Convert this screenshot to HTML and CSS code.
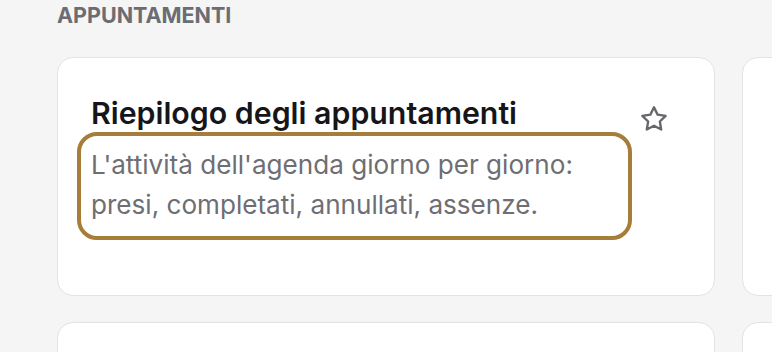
FILE: index.html
```html
<!DOCTYPE html>
<html lang="it">
<head>
<meta charset="utf-8">
<title>Appuntamenti</title>
<link rel="stylesheet" href="styles.css">
</head>
<body>
<section class="section">
  <h2 class="section-title">APPUNTAMENTI</h2>
  <div class="grid">
    <article class="card">
      <div class="card-head">
        <h3 class="card-title">Riepilogo degli appuntamenti</h3>
        <button class="fav" aria-label="Preferito">
          <svg width="28" height="28" viewBox="0 0 24 24" fill="none" stroke="currentColor" stroke-width="2" stroke-linejoin="round" stroke-linecap="round"><polygon points="12 2 15.09 8.26 22 9.27 17 14.14 18.18 21.02 12 17.77 5.82 21.02 7 14.14 2 9.27 8.91 8.26 12 2"/></svg>
        </button>
      </div>
      <p class="card-desc">L'attività dell'agenda giorno per giorno: presi, completati, annullati, assenze.</p>
    </article>
    <article class="card"></article>
    <article class="card"></article>
    <article class="card"></article>
  </div>
</section>
</body>
</html>
```
FILE: styles.css
```css
html, body {
  margin: 0;
  padding: 0;
  background: #f5f5f5;
  overflow: hidden;
  font-family: Inter, "Noto Sans", sans-serif;
}

.section {
  padding: 3px 0 0 57px;
}

.section-title {
  margin: 0 0 30px;
  font-size: 21.5px;
  line-height: 24px;
  font-weight: 700;
  color: #6c6c73;
}

.grid {
  display: grid;
  grid-template-columns: 658px 658px;
  grid-auto-rows: 239px;
  column-gap: 27px;
  row-gap: 26px;
}

.card {
  box-sizing: border-box;
  background: #ffffff;
  border: 1px solid #e3e3e3;
  border-radius: 16px;
  padding: 37px 46px 0 33px;
}

.card-head {
  display: flex;
  align-items: flex-start;
  justify-content: space-between;
}

.card-title {
  margin: 0;
  font-size: 30.3px;
  line-height: 36px;
  font-weight: 600;
  color: #16161a;
}

.fav {
  border: 0;
  background: none;
  padding: 0;
  margin-top: 10px;
  color: #66666c;
  display: flex;
}

.card-desc {
  position: relative;
  margin: 12px 0 0;
  max-width: 541px;
  font-size: 26.1px;
  line-height: 40px;
  color: #6e6e73;
}

.card-desc::before {
  content: "";
  position: absolute;
  top: -13px;
  left: -14px;
  right: 0;
  bottom: -15px;
  border: 4px solid #a67d39;
  border-radius: 20px;
}
```
